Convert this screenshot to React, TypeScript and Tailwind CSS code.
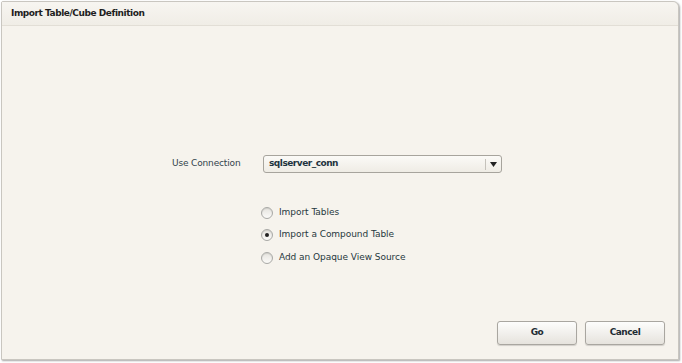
import React from "react";

function Radio({ checked }: { checked?: boolean }) {
  return (
    <span className="w-[12px] h-[12px] rounded-full border border-[#a9a9a6] bg-gradient-to-b from-[#e6e4df] to-[#fbfaf8] flex items-center justify-center shadow-[inset_0_1px_1px_rgba(0,0,0,0.1)]">
      {checked && <span className="w-[4px] h-[4px] rounded-full bg-[#222]" />}
    </span>
  );
}

export default function App() {
  return (
    <div className="w-[682px] h-[363px] bg-white p-[1px] pr-[3px] pb-[3px]" style={{ fontFamily: '"DejaVu Sans", Verdana, sans-serif' }}>
      <div className="w-full h-full flex flex-col rounded-tr-[6px] rounded-tl-[2px] border border-[#c9c6c0] bg-[#f6f3ed] shadow-[1px_1px_2px_rgba(0,0,0,0.35)]">
        <div className="h-[24px] flex items-center pl-[9px] border-b border-[#e2ded6] bg-gradient-to-b from-[#f7f5f1] to-[#f0ede6] rounded-tr-[6px]">
          <span className="text-[9px] font-bold text-[#1e1e1e] tracking-[-0.45px]">Import Table/Cube Definition</span>
        </div>
        <div className="flex-1 flex flex-col">
          <div className="h-[129px]" />
          <div className="flex items-center h-[18px]">
            <span className="ml-[170px] w-[91px] text-[9px] text-[#33434c] tracking-[-0.15px]">Use Connection</span>
            <div className="w-[239px] h-[18px] rounded-[3px] border border-[#a7a49d] bg-gradient-to-b from-[#fbfaf7] to-[#efece5] flex items-center">
              <span className="flex-1 pl-[5px] text-[9px] font-bold text-[#1f3440] tracking-[-0.5px]">sqlserver_conn</span>
              <span className="w-px h-[11px] bg-[#c5c2bb]" />
              <span className="w-[15px] flex justify-center">
                <svg width="7" height="5" viewBox="0 0 7 5"><path d="M0 0h7L3.5 5z" fill="#222" /></svg>
              </span>
            </div>
          </div>
          <div className="h-[33px]" />
          <div className="ml-[259px] flex flex-col gap-[9.5px]">
            {[
              ["Import Tables", false],
              ["Import a Compound Table", true],
              ["Add an Opaque View Source", false],
            ].map(([label, checked]) => (
              <div key={label as string} className="flex items-center h-[13px]">
                <Radio checked={checked as boolean} />
                <span className="ml-[6px] text-[9px] text-[#263840] tracking-[-0.05px]">{label as string}</span>
              </div>
            ))}
          </div>
          <div className="flex-1" />
          <div className="flex justify-end gap-[8px] pr-[13px] pb-[14px]">
            {["Go", "Cancel"].map((t) => (
              <button key={t} className="w-[80px] h-[24px] rounded-[3px] border border-[#a9a6a0] bg-gradient-to-b from-[#fdfdfc] to-[#e6e3dd] text-[9px] font-bold text-[#1e2c33] tracking-[-0.5px] shadow-[0_1px_1px_rgba(0,0,0,0.15)]">
                {t}
              </button>
            ))}
          </div>
        </div>
      </div>
    </div>
  );
}
